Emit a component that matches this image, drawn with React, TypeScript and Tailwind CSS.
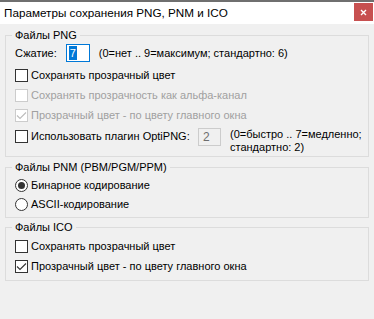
import React from "react";

const font = { fontFamily: '"Liberation Sans", Arial, sans-serif' };

function CheckMark({ color }: { color: string }) {
  return (
    <svg width="11" height="11" viewBox="0 0 11 11" className="block">
      <polyline points="1,5.5 4,8.5 10,2.5" fill="none" stroke={color} strokeWidth="1.1" />
    </svg>
  );
}

function Checkbox({ label, checked = false, disabled = false }: { label: string; checked?: boolean; disabled?: boolean }) {
  return (
    <div className="flex h-[20px] items-center">
      <div
        className={
          "flex h-[13px] w-[13px] shrink-0 items-center justify-center border bg-white " +
          (disabled ? "border-[#cccccc]" : "border-[#333333]")
        }
      >
        {checked && <CheckMark color={disabled ? "#bcbcbc" : "#333333"} />}
      </div>
      <span className={"ml-[3px] whitespace-nowrap " + (disabled ? "text-[#a0a0a0]" : "text-black")}>{label}</span>
    </div>
  );
}

function Radio({ label, checked = false }: { label: string; checked?: boolean }) {
  return (
    <div className="flex h-[19px] items-center">
      <div className="flex h-[13px] w-[13px] shrink-0 items-center justify-center rounded-full border border-[#333333] bg-white">
        {checked && <div className="h-[7px] w-[7px] rounded-full bg-[#333333]" />}
      </div>
      <span className="ml-[3px] whitespace-nowrap text-black">{label}</span>
    </div>
  );
}

function Group({ title, children, className = "" }: { title: string; children: React.ReactNode; className?: string }) {
  return (
    <fieldset className={"m-0 border border-[#dcdcdc] px-[6px] " + className}>
      <legend className="px-[3px] leading-[16px] text-black">{title}</legend>
      <div className="pl-[3px]">{children}</div>
    </fieldset>
  );
}

export default function App() {
  return (
    <div className="h-[319px] w-[374px] overflow-hidden border-t-2 border-[#6f6f6f] bg-[#f0f0f0] text-[11px]" style={font}>
      <div className="flex h-[22px] items-start justify-between bg-white">
        <span className="ml-[4px] mt-[3px] text-[11.7px] leading-[16px] text-black">Параметры сохранения PNG, PNM и ICO</span>
        <div className="mr-[1px] mt-[1px] flex h-[18px] w-[19px] items-center justify-center bg-[#c75050]">
          <svg width="7" height="7" viewBox="0 0 7 7">
            <path d="M1 1 L6 6 M6 1 L1 6" stroke="#ffffff" strokeWidth="1.4" />
          </svg>
        </div>
      </div>
      <div className="px-[5px] pt-[3px]">
        <Group title="Файлы PNG" className="pb-[2px]">
          <div className="flex h-[20px] items-center">
            <span className="whitespace-nowrap">Сжатие:</span>
            <div className="ml-[9px] flex h-[18px] w-[24px] items-center border border-[#0078d7] bg-white pl-[2px]">
              <span className="bg-[#0078d7] px-[1px] leading-[14px] text-white">7</span>
            </div>
            <span className="ml-[9px] whitespace-nowrap">(0=нет .. 9=максимум; стандартно: 6)</span>
          </div>
          <div className="mt-[2px]">
            <Checkbox label="Сохранять прозрачный цвет" />
            <Checkbox label="Сохранять прозрачность как альфа-канал" disabled />
            <Checkbox label="Прозрачный цвет - по цвету главного окна" checked disabled />
          </div>
          <div className="mt-[1px] flex items-start">
            <div className="w-[183px] shrink-0">
              <Checkbox label="Использовать плагин OptiPNG:" />
            </div>
            <div className="mt-[2px] flex h-[18px] w-[23px] shrink-0 items-center border border-[#cccccc] bg-[#f0f0f0] pl-[4px] text-[12px] text-[#6d6d6d]">
              2
            </div>
            <div className="ml-[9px] mt-[2px] leading-[13px]">
              <div className="whitespace-nowrap">(0=быстро .. 7=медленно;</div>
              <div className="whitespace-nowrap">стандартно: 2)</div>
            </div>
          </div>
        </Group>
        <Group title="Файлы PNM (PBM/PGM/PPM)" className="mt-[2px] pb-[3px]">
          <div className="mt-[1px]">
            <Radio label="Бинарное кодирование" checked />
            <Radio label="ASCII-кодирование" />
          </div>
        </Group>
        <Group title="Файлы ICO" className="mt-[1px] pb-[4px]">
          <div className="mt-[1px]">
            <Checkbox label="Сохранять прозрачный цвет" />
            <Checkbox label="Прозрачный цвет - по цвету главного окна" checked />
          </div>
        </Group>
      </div>
    </div>
  );
}
